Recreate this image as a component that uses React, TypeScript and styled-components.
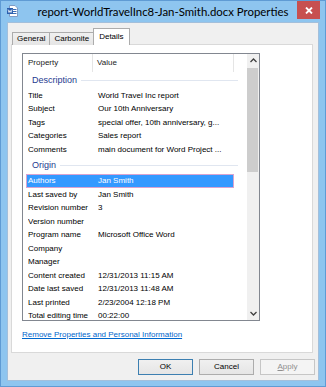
import React from "react";
import styled, { createGlobalStyle } from "styled-components";

const Global = createGlobalStyle`
  html, body { margin: 0; padding: 0; background: #ffffff; }
  body { width: 326px; height: 387px; overflow: hidden; font-family: "Liberation Sans", Arial, sans-serif; }
  * { box-sizing: border-box; }
`;

const Window = styled.div`
  width: 326px;
  height: 387px;
  background: #8ec5ef;
  border: 1px solid #5f9bd4;
  display: flex;
  flex-direction: column;
`;

const TitleBar = styled.div`
  flex: none;
  height: 21px;
  display: grid;
  grid-template-columns: 1fr auto 1fr;
  align-items: start;
`;

const IconCell = styled.div`
  padding: 4px 0 0 6px;
  display: flex;
`;

const TitleText = styled.div`
  font-family: Lato, "Liberation Sans", sans-serif;
  font-size: 11.4px;
  line-height: 21px;
  color: #000;
  white-space: nowrap;
`;

const CloseCell = styled.div`
  display: flex;
  justify-content: flex-end;
  padding-right: 5px;
`;

const CloseButton = styled.div`
  width: 23px;
  height: 18px;
  background: #c75050;
  display: flex;
  align-items: center;
  justify-content: center;
`;

const Client = styled.div`
  flex: 1;
  margin: 0 6px 5px 6px;
  background: #f0f0f0;
  border: 1px solid #a3bfdb;
  padding: 5px 5px 5px 3px;
  display: flex;
  flex-direction: column;
`;

const TabStrip = styled.div`
  position: relative;
  z-index: 1;
  height: 17px;
  margin: 0 0 -1px 1px;
  display: flex;
  align-items: flex-end;
`;

const Tab = styled.div<{ $active?: boolean }>`
  height: ${(p) => (p.$active ? 17 : 13)}px;
  margin-left: -1px;
  padding: 0 ${(p) => (p.$active ? 5 : 4)}px;
  border: 1px solid #acacac;
  border-bottom: none;
  background: ${(p) => (p.$active ? "#ffffff" : "linear-gradient(#f0f0f0, #e5e5e5)")};
  font-size: 8px;
  line-height: ${(p) => (p.$active ? 15 : 12)}px;
  color: #000;
  white-space: nowrap;
  &:first-child { margin-left: 0; }
`;

const Panel = styled.div`
  height: 309px;
  background: #ffffff;
  border: 1px solid #d9d9d9;
  padding: 8px 0 0 10px;
  display: flex;
  flex-direction: column;
`;

const ListView = styled.div`
  width: 238px;
  height: 268px;
  border: 1px solid #828790;
  display: flex;
  background: #fff;
`;

const ListContent = styled.div`
  flex: 1;
  overflow: hidden;
  display: flex;
  flex-direction: column;
`;

const Header = styled.div`
  flex: none;
  height: 18px;
  display: flex;
`;

const HeaderCell = styled.div<{ $w: number; $pad: number }>`
  width: ${(p) => p.$w}px;
  padding-left: ${(p) => p.$pad}px;
  border-right: 1px solid #e5e5e5;
  font-size: 8px;
  line-height: 18px;
  color: #1a1a1a;
`;

const Group = styled.div<{ $h: number }>`
  flex: none;
  height: ${(p) => p.$h}px;
  display: flex;
  align-items: center;
  padding: 0 9px;
  color: #1e3a8f;
  font-size: 9px;
  &::after {
    content: "";
    flex: 1;
    height: 1px;
    margin-left: 4px;
    background: #e0e6f0;
  }
`;

const Row = styled.div<{ $selected?: boolean }>`
  flex: none;
  height: 13.5px;
  width: 208px;
  margin-left: 3px;
  padding-left: 1px;
  display: flex;
  align-items: center;
  font-size: 8px;
  white-space: nowrap;
  color: ${(p) => (p.$selected ? "#ffffff" : "#000000")};
  background: ${(p) => (p.$selected ? "#3399ff" : "transparent")};
  border: 1px solid ${(p) => (p.$selected ? "#d9a3cf" : "transparent")};
`;

const NameCell = styled.div`
  width: 68px;
  flex: none;
  overflow: hidden;
`;

const ValueCell = styled.div`
  flex: 1;
  padding-left: 2px;
  overflow: hidden;
`;

const ScrollBar = styled.div`
  width: 12px;
  flex: none;
  background: #f0f0f0;
  display: flex;
  flex-direction: column;
`;

const Arrow = styled.div<{ $h: number }>`
  height: ${(p) => p.$h}px;
  flex: none;
  display: flex;
  align-items: center;
  justify-content: center;
`;

const Thumb = styled.div`
  height: 104px;
  margin: 1px 1px 0 0;
  background: #cdcdcd;
  flex: none;
`;

const Track = styled.div`
  flex: 1;
`;

const Link = styled.a`
  margin-top: 9px;
  font-size: 8px;
  line-height: 10px;
  color: #0066cc;
  text-decoration: underline;
  align-self: flex-start;
`;

const ButtonRow = styled.div`
  margin: 6px -2px 0 0;
  display: flex;
  justify-content: flex-end;
  gap: 6px;
`;

const Button = styled.div<{ $kind?: "default" | "disabled" }>`
  width: 55px;
  height: 16px;
  border: 1px solid
    ${(p) => (p.$kind === "default" ? "#3c7fb1" : p.$kind === "disabled" ? "#c6c6c6" : "#acacac")};
  background: ${(p) => (p.$kind === "disabled" ? "#f4f4f4" : "linear-gradient(#f0f0f0, #e5e5e5)")};
  color: ${(p) => (p.$kind === "disabled" ? "#8f8f8f" : "#000")};
  font-size: 8px;
  line-height: 14px;
  text-align: center;
  u { text-decoration: underline; }
`;

const DocIcon = () => (
  <svg width="11" height="12" viewBox="0 0 11 12">
    <path d="M2.5 0.5 H8 L10.5 3 V11.5 H2.5 Z" fill="#ffffff" stroke="#7f9cc4" />
    <line x1="6" y1="4.5" x2="9.5" y2="4.5" stroke="#3b6db4" />
    <line x1="6" y1="6.5" x2="9.5" y2="6.5" stroke="#3b6db4" />
    <line x1="6" y1="8.5" x2="9.5" y2="8.5" stroke="#3b6db4" />
    <rect x="0" y="3" width="6" height="6" fill="#2b5fae" />
    <polyline points="1,4.5 2,7.5 3,5.5 4,7.5 5,4.5" fill="none" stroke="#ffffff" strokeWidth="0.8" />
  </svg>
);

const CloseIcon = () => (
  <svg width="8" height="7" viewBox="0 0 8 7">
    <line x1="1" y1="0.5" x2="7" y2="6.5" stroke="#fff" strokeWidth="1.8" />
    <line x1="7" y1="0.5" x2="1" y2="6.5" stroke="#fff" strokeWidth="1.8" />
  </svg>
);

const Chevron = ({ down }: { down?: boolean }) => (
  <svg width="7" height="5" viewBox="0 0 7 5">
    <polyline
      points={down ? "0.5,1 3.5,4 6.5,1" : "0.5,4 3.5,1 6.5,4"}
      fill="none"
      stroke="#404040"
      strokeWidth="1.3"
    />
  </svg>
);

type Item = { name: string; value?: string; selected?: boolean };

const description: Item[] = [
  { name: "Title", value: "World Travel Inc report" },
  { name: "Subject", value: "Our 10th Anniversary" },
  { name: "Tags", value: "special offer, 10th anniversary, g..." },
  { name: "Categories", value: "Sales report" },
  { name: "Comments", value: "main document for Word Project ..." },
];

const origin: Item[] = [
  { name: "Authors", value: "Jan Smith", selected: true },
  { name: "Last saved by", value: "Jan Smith" },
  { name: "Revision number", value: "3" },
  { name: "Version number" },
  { name: "Program name", value: "Microsoft Office Word" },
  { name: "Company" },
  { name: "Manager" },
  { name: "Content created", value: "12/31/2013 11:15 AM" },
  { name: "Date last saved", value: "12/31/2013 11:48 AM" },
  { name: "Last printed", value: "2/23/2004 12:18 PM" },
  { name: "Total editing time", value: "00:22:00" },
];

const renderRows = (items: Item[]) =>
  items.map((it) => (
    <Row key={it.name} $selected={it.selected}>
      <NameCell>{it.name}</NameCell>
      <ValueCell>{it.value ?? ""}</ValueCell>
    </Row>
  ));

export default function App() {
  return (
    <>
      <Global />
      <Window>
        <TitleBar>
          <IconCell>
            <DocIcon />
          </IconCell>
          <TitleText>report-WorldTravelInc8-Jan-Smith.docx Properties</TitleText>
          <CloseCell>
            <CloseButton>
              <CloseIcon />
            </CloseButton>
          </CloseCell>
        </TitleBar>
        <Client>
          <TabStrip>
            <Tab>General</Tab>
            <Tab>Carbonite</Tab>
            <Tab $active>Details</Tab>
          </TabStrip>
          <Panel>
            <ListView>
              <ListContent>
                <Header>
                  <HeaderCell $w={70} $pad={5}>Property</HeaderCell>
                  <HeaderCell $w={141} $pad={4}>Value</HeaderCell>
                </Header>
                <Group $h={16.5}>Description</Group>
                {renderRows(description)}
                <Group $h={18}>Origin</Group>
                {renderRows(origin)}
              </ListContent>
              <ScrollBar>
                <Arrow $h={13}>
                  <Chevron />
                </Arrow>
                <Thumb />
                <Track />
                <Arrow $h={14}>
                  <Chevron down />
                </Arrow>
              </ScrollBar>
            </ListView>
            <Link href="#">Remove Properties and Personal Information</Link>
          </Panel>
          <ButtonRow>
            <Button $kind="default">OK</Button>
            <Button>Cancel</Button>
            <Button $kind="disabled">
              <u>A</u>pply
            </Button>
          </ButtonRow>
        </Client>
      </Window>
    </>
  );
}
